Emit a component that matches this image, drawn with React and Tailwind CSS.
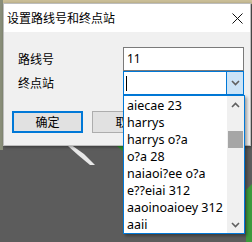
import React from 'react';

const items = [
    'aiecae 23',
    'harrys',
    'harrys o?a',
    'o?a 28',
    'naiaoi?ee o?a',
    'e??eiai 312',
    'aaoinoaioey 312',
    'aaii',
];

const Chevron = ({ up }) => (
    <svg width="9" height="6" viewBox="0 0 9 6">
        <path
            d={up ? 'M1 5 L4.5 1.5 L8 5' : 'M1 1 L4.5 4.5 L8 1'}
            fill="none"
            stroke="#606060"
            strokeWidth="1.6"
        />
    </svg>
);

export default function App() {
    return (
        <div className="relative w-[252px] h-[242px] overflow-hidden bg-[#5c5c5c] font-['Noto_Sans','Noto_Sans_CJK_SC',sans-serif]">
            {/* map behind the dialog */}
            <div className="absolute left-0 top-0 w-full h-[4px] bg-[#cbbf98]" />
            <div className="absolute left-0 top-0 w-[3px] h-[150px] bg-[#8a8f7a]" />
            <svg className="absolute left-0 top-[140px]" width="252" height="102" viewBox="0 0 252 102">
                <path d="M70 4 L84 14 L95 25 L90 25 L78 15 L68 6 Z" fill="#e8e8e8" />
                <path d="M112 2 L124 2 L124 12 Z" fill="#2f8f2f" />
                <path d="M246 50 L252 44 L252 102 L246 102 Z" fill="#3c9a3c" />
            </svg>

            {/* dialog */}
            <div className="absolute left-[3px] top-[3px] w-[248px] h-[143px] flex flex-col shadow-[1px_1px_3px_rgba(0,0,0,0.4)] border border-[#bdbdbd]">
                <div className="h-[28px] shrink-0 bg-white flex items-center justify-between pl-[3px] pr-[7px]">
                    <span className="text-[12px] text-black font-['Noto_Sans_CJK_SC',sans-serif]">设置路线号和终点站</span>
                    <svg width="11" height="11" viewBox="0 0 11 11">
                        <path d="M0.5 0.5 L10.5 10.5 M10.5 0.5 L0.5 10.5" stroke="#111" strokeWidth="1" />
                    </svg>
                </div>
                <div className="flex-1 bg-[#f0f0f0] pt-[15px] font-['Noto_Sans_CJK_SC',sans-serif] text-[12px] text-black">
                    <div className="grid grid-cols-[105px_121px] pl-[14px]">
                        <div className="h-[24px] flex items-center">路线号</div>
                        <div className="h-[24px] bg-white border border-[#7a7a7a] flex items-center pl-[3px] font-['Noto_Sans',sans-serif] text-[12px]">
                            11
                        </div>
                        <div className="h-[24px] flex items-center">终点站</div>
                        <div className="h-[24px] bg-white border border-[#0078d7] flex items-stretch">
                            <div className="flex-1 flex items-center pl-[2px]">
                                <div className="w-[1px] h-[15px] bg-black" />
                            </div>
                            <div className="w-[17px] bg-[#cce4f7] border-l border-[#0078d7] flex items-center justify-center">
                                <Chevron />
                            </div>
                        </div>
                    </div>
                    <div className="flex gap-[9px] pl-[8px] mt-[16px]">
                        <div className="w-[71px] h-[22px] bg-[#e1e1e1] border-2 border-[#0078d7] flex items-center justify-center">确定</div>
                        <div className="w-[71px] h-[22px] bg-[#e1e1e1] border border-[#adadad] flex items-center justify-center">取消</div>
                    </div>
                </div>
            </div>

            {/* dropdown list */}
            <div className="absolute left-[123px] top-[95px] w-[122px] h-[139px] bg-white border border-[#0078d7] flex shadow-[2px_2px_3px_rgba(0,0,0,0.35)]">
                <div className="flex-1 flex flex-col pt-[1px] pl-[3px] text-[12.5px] leading-[17px] text-black font-['Noto_Sans',sans-serif]">
                    {items.map((t) => (
                        <div key={t} className="whitespace-nowrap">{t}</div>
                    ))}
                </div>
                <div className="w-[17px] bg-[#f0f0f0] flex flex-col items-center">
                    <div className="h-[17px] flex items-center justify-center">
                        <Chevron up />
                    </div>
                    <div className="w-[15px] h-[17px] bg-[#a6a6a6] mt-[18px]" />
                    <div className="flex-1" />
                    <div className="h-[17px] flex items-center justify-center">
                        <Chevron />
                    </div>
                </div>
            </div>
        </div>
    );
}
